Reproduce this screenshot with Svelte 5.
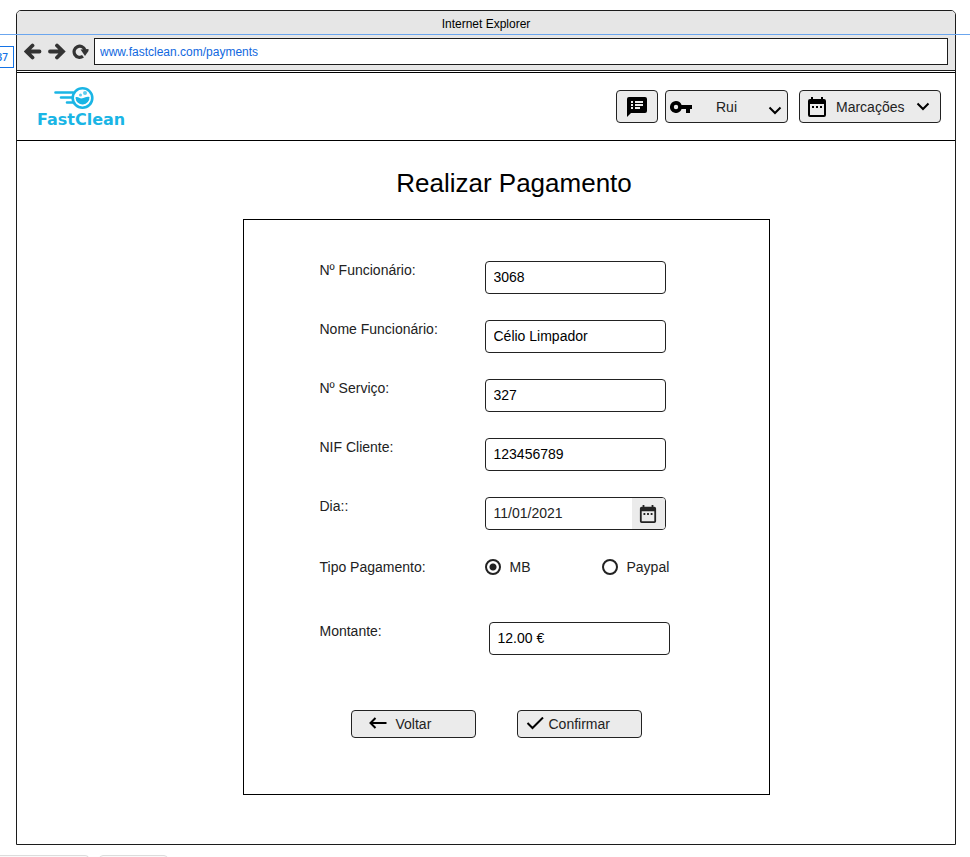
<script>
  let employeeId = $state('3068');
  let employeeName = $state('Célio Limpador');
  let serviceId = $state('327');
  let clientNif = $state('123456789');
  let day = $state('11/01/2021');
  let method = $state('mb');
  let amount = $state('12.00 €');
</script>

{#snippet calendar(size)}
  <svg width={size} height={size} viewBox="0 0 20 20" aria-hidden="true">
    <path fill="currentColor" fill-rule="evenodd" d="M4 0h2v2h8V0h2v2h1a2 2 0 0 1 2 2v14a2 2 0 0 1-2 2H3a2 2 0 0 1-2-2V4a2 2 0 0 1 2-2h1zM3 7v11h14V7zM5 9h2v2H5zm4 0h2v2H9zM13 9h2v2h-2z" />
  </svg>
{/snippet}

{#snippet chevron()}
  <svg width="14" height="9" viewBox="0 0 14 9" aria-hidden="true">
    <path d="M1.500 1.500L7 7l5.500-5.500" fill="none" stroke="currentColor" stroke-width="2" />
  </svg>
{/snippet}

<div class="page">
  <div class="window">
    <header class="chrome">
      <div class="titlebar">Internet Explorer</div>
      <div class="toolbar">
        <button class="tool" aria-label="Back">
          <svg width="18" height="18" viewBox="0 0 18 18"><path d="M15.500 8.500H3M8.500 2.500l-6 6 6 6" fill="none" stroke="#333" stroke-width="3.800" stroke-linecap="round" /></svg>
        </button>
        <button class="tool" aria-label="Forward">
          <svg width="18" height="18" viewBox="0 0 18 18"><path d="M2 8.500h12.500M9 2.500l6 6-6 6" fill="none" stroke="#333" stroke-width="3.800" stroke-linecap="round" /></svg>
        </button>
        <button class="tool" aria-label="Reload">
          <svg width="18" height="18" viewBox="0 0 18 18"><path d="M11 13.300A5.600 5.600 0 1 1 13 7" fill="none" stroke="#333" stroke-width="3.200" /><path d="M8.500 6.500L16.500 6v2l-3.500 5z" fill="#333" /></svg>
        </button>
        <input class="address" type="text" aria-label="Address" value="www.fastclean.com/payments" />
      </div>
    </header>

    <nav class="nav">
      <a class="logo" href="#home">
        <svg width="42" height="24" viewBox="0 0 42 24" aria-hidden="true">
          <g stroke="#1ab5e5" stroke-width="2.600" stroke-linecap="round" fill="none">
            <path d="M2.500 6.500H20M8 11.500h11M14 16.500h6" />
            <circle cx="29.500" cy="12" r="9.800" />
          </g>
          <path d="M22.500 11.500c2.500-1.500 4 1.500 7 .8s4-2 7-1.300a7 7 0 0 1-14 1z" fill="#1ab5e5" />
          <circle cx="27.500" cy="9" r="1.500" fill="#5fcdee" />
          <circle cx="32" cy="7" r="2" fill="#5fcdee" />
        </svg>
        <span>FastClean</span>
      </a>
      <button class="box chat" aria-label="Mensagens">
        <svg width="20" height="20" viewBox="0 0 20 20">
          <path fill="#000" fill-rule="evenodd" d="M2 0h16a2 2 0 0 1 2 2v12a2 2 0 0 1-2 2H4l-4 4V2a2 2 0 0 1 2-2zM4 4v2h2V4zm0 3v2h2V7zm0 3v2h2v-2zM8 4v2h8V4zm0 3v2h8V7zm0 3v2h5v-2z" />
        </svg>
      </button>
      <button class="box user" aria-haspopup="menu">
        <svg width="22" height="12" viewBox="0 0 22 12" aria-hidden="true">
          <path fill="#000" fill-rule="evenodd" d="M6 0a6 6 0 0 1 5.600 4H22v4h-2v4h-4V8h-4.400A6 6 0 1 1 6 0zm0 3.800a2.200 2.200 0 1 0 0 4.400 2.200 2.200 0 0 0 0-4.400z" />
        </svg>
        <span>Rui</span>
        {@render chevron()}
      </button>
      <button class="box bookings" aria-haspopup="menu">
        {@render calendar(20)}
        <span>Marcações</span>
        {@render chevron()}
      </button>
    </nav>

    <main>
      <h1>Realizar Pagamento</h1>
      <form class="card" onsubmit={(e) => e.preventDefault()}>
        <div class="row">
          <label for="employee-id">Nº Funcionário:</label>
          <input class="field" id="employee-id" type="text" bind:value={employeeId} />
        </div>
        <div class="row">
          <label for="employee-name">Nome Funcionário:</label>
          <input class="field" id="employee-name" type="text" bind:value={employeeName} />
        </div>
        <div class="row">
          <label for="service-id">Nº Serviço:</label>
          <input class="field" id="service-id" type="text" bind:value={serviceId} />
        </div>
        <div class="row">
          <label for="client-nif">NIF Cliente:</label>
          <input class="field" id="client-nif" type="text" bind:value={clientNif} />
        </div>
        <div class="row">
          <label for="day">Dia::</label>
          <div class="field date">
            <input id="day" type="text" bind:value={day} />
            <button type="button" aria-label="Escolher dia">{@render calendar(18)}</button>
          </div>
        </div>
        <div class="row methods" role="radiogroup" aria-labelledby="method-label">
          <span id="method-label">Tipo Pagamento:</span>
          <div class="options">
            <label><input type="radio" name="method" value="mb" bind:group={method} />MB</label>
            <label><input type="radio" name="method" value="paypal" bind:group={method} />Paypal</label>
          </div>
        </div>
        <div class="row amount">
          <label for="amount">Montante:</label>
          <input class="field" id="amount" type="text" bind:value={amount} />
        </div>
        <div class="actions">
          <button class="box action back" type="button">
            <svg width="18" height="14" viewBox="0 0 18 14" aria-hidden="true"><path d="M17.500 6H2M6.500 1L1.500 6l5 5" fill="none" stroke="#000" stroke-width="2" /></svg>
            Voltar
          </button>
          <button class="box action" type="submit">
            <svg width="18" height="14" viewBox="0 0 18 14" aria-hidden="true"><path d="M1.500 6l5 5L17 .5" fill="none" stroke="#000" stroke-width="2" /></svg>
            Confirmar
          </button>
        </div>
      </form>
    </main>
  </div>

  <div class="guide"></div>
  <div class="marker">37</div>
  <div class="tabs"><span></span><span></span></div>
</div>

<style>
  :global(body) {
    margin: 0;
    background: #fff;
  }
  .page,
  .page :is(button, input) {
    font-family: "Liberation Sans", Arial, sans-serif;
    font-size: 14px;
    color: #222;
    box-sizing: border-box;
  }
  .page {
    display: flex;
    min-height: 100vh;
    padding: 10px 14px 12px 16px;
  }
  svg {
    display: block;
    flex: none;
  }
  .window {
    flex: 1;
    min-width: 0;
    box-sizing: border-box;
    border: 1px solid #1c1c1c;
    border-radius: 5px 5px 0 0;
  }
  .chrome {
    background: #e6e6e6;
    border-bottom: 1px solid #1c1c1c;
    border-radius: 4px 4px 0 0;
  }
  .titlebar {
    font-size: 12px;
    line-height: 27px;
    text-align: center;
    color: #000;
  }
  .toolbar {
    display: flex;
    align-items: center;
    gap: 6px;
    padding: 0 7px 5px;
  }
  .tool {
    padding: 0;
    border: 0;
    background: none;
  }
  .page .address {
    flex: 1;
    min-width: 0;
    height: 27px;
    margin-left: -2px;
    padding: 0 5px;
    border: 1px solid #1c1c1c;
    background: #fff;
    font-size: 12px;
    color: #1068e0;
  }
  .nav {
    display: flex;
    align-items: center;
    height: 67px;
    margin-top: 1px;
    padding: 0 14px 0 20px;
    border-top: 1px solid #000;
    border-bottom: 1px solid #000;
  }
  .logo {
    display: flex;
    flex-direction: column;
    margin-right: auto;
    padding-top: 2px;
    color: #1ab5e5;
    font: bold 16px/20px "DejaVu Sans", sans-serif;
    text-decoration: none;
  }
  .logo svg {
    margin-left: 16px;
  }
  .box {
    display: flex;
    align-items: center;
    height: 33px;
    padding: 0;
    border: 1px solid #222;
    border-radius: 4px;
    background: #ebebeb;
  }
  .box svg {
    color: #000;
  }
  .chat {
    justify-content: center;
    width: 42px;
    margin-right: 7px;
  }
  .user {
    gap: 24px;
    width: 123px;
    margin-right: 11px;
    padding: 0 5px 0 4px;
  }
  .user svg:last-child {
    margin: 7px 0 0 auto;
  }
  .bookings {
    gap: 9px;
    width: 142px;
    padding: 0 10px 0 7px;
  }
  .bookings :global(svg:last-child) {
    margin-left: auto;
  }
  main {
    display: flex;
    flex-direction: column;
    align-items: center;
    padding: 26px 0 49px 40px;
  }
  h1 {
    margin: 0 0 20px;
    padding-left: 16px;
    font-size: 26px;
    font-weight: normal;
    line-height: 32px;
    color: #000;
  }
  .card {
    display: flex;
    flex-direction: column;
    gap: 26px;
    box-sizing: border-box;
    width: 100%;
    max-width: 527px;
    padding: 41px 75px 56px 76px;
    border: 1px solid #000;
  }
  .row {
    display: grid;
    grid-template-columns: 165px 181px;
    line-height: 18px;
  }
  .amount {
    grid-template-columns: 169px 181px;
    margin-top: 18px;
  }
  .page .field {
    width: 100%;
    height: 33px;
    box-sizing: border-box;
    padding: 0 8px 2px;
    border: 1px solid #222;
    border-radius: 4px;
    background: #fff;
    color: #000;
  }
  .page .date {
    display: flex;
    padding: 0;
    overflow: hidden;
  }
  .date input {
    flex: 1;
    min-width: 0;
    padding: 0 8px 2px;
    border: 0;
    background: none;
  }
  .date button {
    display: flex;
    align-items: center;
    justify-content: center;
    width: 33px;
    padding: 0;
    border: 0;
    background: #ebebeb;
  }
  .methods {
    grid-template-columns: 165px 1fr;
    align-items: center;
    height: 22px;
  }
  .options {
    display: flex;
    gap: 71px;
  }
  .options label {
    display: flex;
    align-items: center;
    gap: 9px;
  }
  .options input {
    appearance: none;
    width: 16px;
    height: 16px;
    margin: 0;
    border: 2px solid #222;
    border-radius: 50%;
    background: #fff;
  }
  .options input:checked {
    background: radial-gradient(circle, #222 3px, #fff 4px);
  }
  .actions {
    display: flex;
    gap: 41px;
    margin-top: 29px;
    padding-left: 31px;
  }
  .action {
    gap: 5px;
    width: 125px;
    height: 28px;
    padding-left: 8px;
  }
  .back {
    gap: 9px;
    padding-left: 17px;
  }
  .guide {
    position: absolute;
    top: 34px;
    left: 0;
    right: 0;
    height: 1px;
    background: #6ba6ee;
  }
  .marker {
    position: absolute;
    top: 46px;
    left: -10px;
    box-sizing: border-box;
    width: 24px;
    height: 22px;
    padding-right: 5px;
    border: 1px solid #1473e6;
    font: 600 10px/20px "Open Sans", sans-serif;
    text-align: right;
    color: #1473e6;
  }
  .tabs {
    position: absolute;
    bottom: 0;
    left: 0;
    display: flex;
    gap: 10px;
    height: 2px;
    overflow: hidden;
  }
  .tabs span {
    box-sizing: border-box;
    width: 69px;
    height: 20px;
    border: 1px solid #dcdcdc;
    border-radius: 4px;
    background: #fafafa;
  }
  .tabs span:first-child {
    width: 89px;
    border-left: 0;
    border-top-left-radius: 0;
  }
</style>
